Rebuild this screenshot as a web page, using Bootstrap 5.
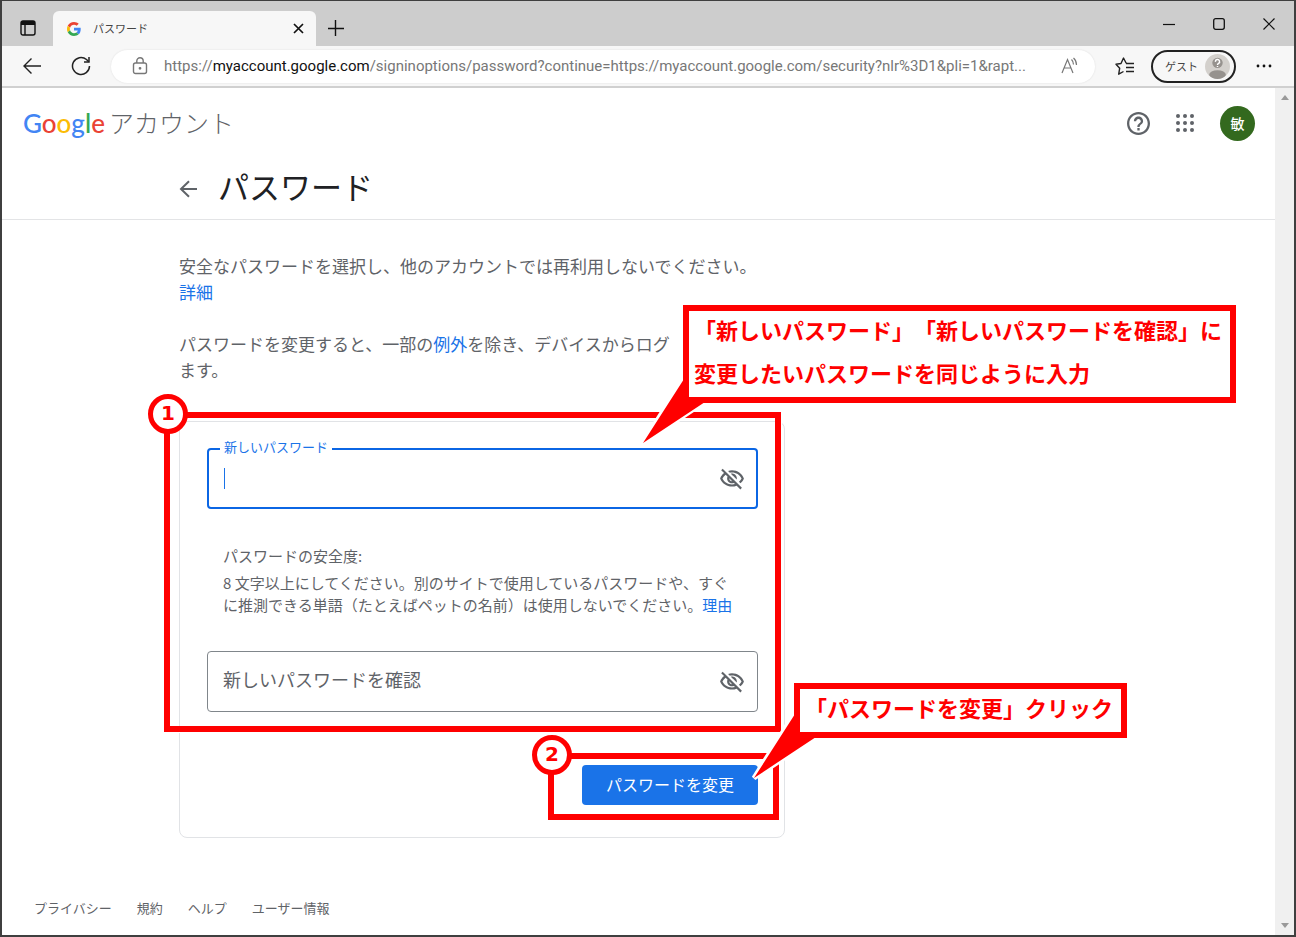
<!DOCTYPE html>
<html lang="ja">
<head>
<meta charset="utf-8">
<meta name="viewport" content="width=device-width, initial-scale=1">
<title>パスワード</title>
<link href="https://cdn.jsdelivr.net/npm/bootstrap@5.3.0/dist/css/bootstrap.min.css" rel="stylesheet">
<style>
body{font-family:"Noto Sans CJK JP",sans-serif;color:#5f6368;background:#3a3a3a}
.plain{background:none;border:0;padding:0;color:inherit;display:flex;align-items:center;justify-content:center;flex:none}
svg{display:block;flex:none}
a{color:#1a73e8;text-decoration:none}
.win{min-height:100vh;border:1px solid #3f3f3f;border-width:1px 2px 2px 2px;background:#fff}
.tabstrip{height:45px;background:#cdcdcd;color:#111}
.tabstrip .lead-btn{width:51px}
.browser-tab{width:263px;height:35px;background:#f7f7f7;border-radius:6px 6px 0 0;padding:0 12px 0 14px;font-size:11px;color:#444}
.win-ctl{width:50px;height:45px}
.toolbar{height:42px;background:#f7f7f7;border-bottom:2px solid #d0d0d0;color:#222;padding:0 22px 0 20px}
.reload{margin:0 20px 0 29px}
.address{height:33px;background:#fff;border-radius:17px;padding:0 16px 0 21px;box-shadow:0 0 2px #ddd;min-width:0}
.address .url{font:15px/32px Roboto,"Open Sans",sans-serif;color:#777;overflow:hidden;text-overflow:ellipsis;white-space:nowrap}
.address b{font-weight:400;color:#111}
.guest{width:85px;height:33px;border:2px solid #222;border-radius:17px;font-size:11px;color:#444;white-space:nowrap}
.fav{margin-left:20px}
.scroll-col{width:19px;background:#f0f0f0;padding:7px 0}
.site-head{height:70px;padding:0 20px 0 21px}
.brand{color:#5f6368;font-size:25px;font-weight:300}
.g-word{font:500 26px/36px Lato,sans-serif}
.apps{margin:0 26px}
.avatar{width:35px;height:35px;border-radius:50%;background:#33691e;color:#fff;font-size:14px;font-weight:500}
.page-wrap{max-width:919px;width:100%;margin:0 auto}
.title-bar{height:62px;border-bottom:1px solid #e3e4e6}
.title-bar h1{font-size:31px;line-height:56px;padding-bottom:6px;font-weight:400;color:#202124}
.body-col{width:606px;max-width:100%;padding-top:33px}
.body-col p{font-size:17px;line-height:26px;margin-bottom:26px}
.pw-card{border:1px solid #e1e3e6;border-radius:8px;margin-top:38px;padding:26px 26px 32px 27px}
.field{height:61px;border:1px solid #80868b;border-radius:4px;padding:0 12px 0 15px}
.field.active{border:2px solid #0b66e4;padding:0 11px 0 15px}
.field input{border:0;outline:0;background:none;font-size:18px;color:#202124;min-width:0;height:55px;padding:0 0 6px;caret-color:transparent}
.field input::placeholder{color:#5f6368;opacity:1}
.field label{position:absolute;left:11px;top:-13px;background:#fff;padding:0 4px;font-size:13px;line-height:20px;color:#1a73e8}
.caret{width:1px;height:21px;background:#1a73e8}
.help{padding:36px 0 35px 16px;font-size:15px;line-height:22px}
.help-title{margin-bottom:5px}
.actions{padding-top:53px}
.btn-go{width:176px;height:40px;padding:0 0 3px;background:#1a73e8;color:#fff;font-size:16px;border-radius:4px;font-weight:400}
.foot{font-size:13px;line-height:20px;padding:0 0 17px 32px;gap:25px}
.foot a{color:#5f6368}
/* Step markers and callouts */
.mark-box{position:absolute;border:6px solid red;pointer-events:none;box-shadow:0 0 0 1px #fff}
.mark-1{inset:-36px -23px -20px -43px}
.mark-2{inset:-12px -21px -15px -34px}
.step{position:absolute;left:-22px;top:-24px;width:40px;height:40px;border:5px solid red;border-radius:50%;background:#fff;color:red;font:bold 20px/29px "DejaVu Sans",sans-serif;text-align:center}
.callout{position:absolute;border:6px solid red;background:#fff;color:red;font-size:22px;line-height:43px;font-weight:700;white-space:nowrap;padding:0 8px 0 5px;box-shadow:0 0 0 1px #fff;z-index:2}
.callout-text{margin:-3px 0 3px;text-spacing-trim:space-all;font-kerning:none;font-feature-settings:"chws" 0,"halt" 0}
.callout svg{position:absolute;overflow:visible;left:-46px;bottom:-46px}
.callout-1{left:476px;top:-143px}
.callout-2{left:212px;top:-82px}
</style>
</head>
<body>
<div class="win d-flex flex-column">
  <div class="tabstrip d-flex align-items-end">
    <button class="plain lead-btn h-100 pt-2" aria-label="タブ操作"><svg width="16" height="16" viewBox="0 0 16 16" fill="none" stroke="currentColor" stroke-width="1.4"><rect x="1" y="1" width="14" height="14" rx="2"/><path d="M1 3h14" stroke-width="4"/><path d="M5 4v11"/></svg></button>
    <div class="browser-tab d-flex align-items-center">
      <svg width="14" height="14" viewBox="0 0 48 48"><path fill="#ea4335" d="M24 9.5c3.5 0 6.700 1.200 9.200 3.600l6.900-6.900C35.900 2.400 30.500 0 24 0 14.600 0 6.500 5.400 2.600 13.200l8 6.200C12.400 13.700 17.700 9.500 24 9.500z"/><path fill="#4285f4" d="M47 24.500c0-1.600-.2-3.100-.4-4.500H24v9h12.900c-.6 3-2.200 5.500-4.700 7.200l7.700 6C44.400 38 47 31.800 47 24.500z"/><path fill="#fbbc05" d="M10.500 28.600c-.5-1.500-.8-3-.8-4.600s.3-3.100.8-4.600l-8-6.200C.9 16.500 0 20.100 0 24s.9 7.500 2.600 10.800z"/><path fill="#34a853" d="M24 48c6.500 0 11.900-2.100 15.900-5.800l-7.700-6c-2.200 1.500-4.900 2.300-8.200 2.300-6.300 0-11.600-4.200-13.500-9.900l-7.900 6.200C6.500 42.600 14.600 48 24 48z"/></svg>
      <span class="ms-2 ps-1 flex-grow-1">パスワード</span>
      <button class="plain" aria-label="タブを閉じる"><svg width="11" height="11" viewBox="0 0 11 11" stroke="#111" stroke-width="1.700"><path d="M1 1l9 9M10 1l-9 9"/></svg></button>
    </div>
    <button class="plain h-100 px-2 ms-1 pt-2" aria-label="新しいタブ"><svg width="16" height="16" viewBox="0 0 16 16" stroke="#111" stroke-width="1.400"><path d="M7.500 0v16M0 8.500h16"/></svg></button>
    <div class="d-flex ms-auto">
      <button class="plain win-ctl" aria-label="最小化"><svg width="12" height="12" viewBox="0 0 12 12" stroke="#111" stroke-width="1.200"><path d="M0 6.500h12"/></svg></button>
      <button class="plain win-ctl" aria-label="最大化"><svg width="12" height="12" viewBox="0 0 12 12" fill="none" stroke="#111" stroke-width="1.300"><rect x=".7" y=".7" width="10.600" height="10.600" rx="2"/></svg></button>
      <button class="plain win-ctl" aria-label="閉じる"><svg width="12" height="12" viewBox="0 0 12 12" stroke="#111" stroke-width="1.200"><path d="M.5.5l11 11M11.500.5l-11 11"/></svg></button>
    </div>
  </div>

  <div class="toolbar d-flex align-items-center">
    <button class="plain" aria-label="戻る"><svg width="20" height="18" viewBox="0 0 20 18" fill="none" stroke="currentColor" stroke-width="1.400"><path d="M19 9H2M9.500 1.500L2 9l7.500 7.500"/></svg></button>
    <button class="plain reload" aria-label="更新"><svg width="20" height="20" viewBox="0 0 20 20" fill="none" stroke="currentColor" stroke-width="1.500"><path d="M18.500 10A8.500 8.500 0 1 1 15.500 3.500L17.800 5.700"/><path d="M18 1v5h-5"/></svg></button>
    <div class="address d-flex align-items-center flex-grow-1">
      <svg width="16" height="18" viewBox="0 0 16 18" fill="none" stroke="#777" stroke-width="1.400"><rect x="1.500" y="6" width="13" height="10.500" rx="2"/><path d="M4.800 6V4a3.200 3.200 0 0 1 6.400 0v2"/><circle cx="8" cy="11.300" r=".7" fill="#777"/></svg>
      <span class="url flex-grow-1 ms-3">https://<b>myaccount.google.com</b>/signinoptions/password?continue=https://myaccount.google.com/security?nlr%3D1&amp;pli=1&amp;rapt...</span>
      <button class="plain ms-1" aria-label="音声で読み上げる"><svg width="18" height="18" viewBox="0 0 18 18" fill="none" stroke="#777" stroke-width="1.200"><path d="M1 16L6.500 2.500 12 16M3 11h7M10.500 2.500q2 2 2 5M12.500 1q3 2.500 3 7"/></svg></button>
    </div>
    <button class="plain fav" aria-label="お気に入り"><svg width="20" height="19" viewBox="0 0 20 19" fill="none" stroke="currentColor" stroke-width="1.400" stroke-linejoin="round"><path d="M11.200 6.200L8.500 1 6 6.500 1 7.200l3.700 4-1 6L8.500 14.500"/><path d="M11 6.500h8M11 10.500h8M11 14.500h8"/></svg></button>
    <button class="plain guest ms-3 px-1"><span class="ms-2 me-auto">ゲスト</span><svg width="25" height="25" viewBox="0 0 24 24"><defs><clipPath id="face"><circle cx="12" cy="12" r="12"/></clipPath></defs><g clip-path="url(#face)"><path fill="#d3d0cc" d="M0 0h24v24H0z"/><ellipse cx="12" cy="20" rx="8" ry="4.500" fill="#96928e"/><circle cx="12" cy="8.500" r="5" fill="#96928e"/></g><path d="M10 7.500a2 2 0 1 1 3 1.500q-1 .5-1 1.500M12 11.500v1" fill="none" stroke="#fff" stroke-width="1.400"/></svg></button>
    <button class="plain ms-3 ps-1" aria-label="設定など"><svg width="16" height="4" viewBox="0 0 16 4" fill="#111"><circle cx="2" cy="2" r="1.400"/><circle cx="8" cy="2" r="1.400"/><circle cx="14" cy="2" r="1.400"/></svg></button>
  </div>

  <div class="d-flex flex-grow-1">
    <div class="d-flex flex-column flex-grow-1">
      <header class="site-head d-flex align-items-center">
        <a href="#" class="brand d-flex align-items-center"><span class="g-word"><span style="color:#4285f4">G</span><span style="color:#ea4335">o</span><span style="color:#fbbc05">o</span><span style="color:#4285f4">g</span><span style="color:#34a853">l</span><span style="color:#ea4335">e</span></span><span class="ms-1">アカウント</span></a>
        <button class="plain ms-auto" aria-label="ヘルプ"><svg width="23" height="23" viewBox="2 2 20 20" fill="#5f6368"><path d="M11 18h2v-2h-2v2zm1-16C6.480 2 2 6.480 2 12s4.480 10 10 10 10-4.480 10-10S17.520 2 12 2zm0 18c-4.410 0-8-3.590-8-8s3.590-8 8-8 8 3.590 8 8-3.590 8-8 8zm0-14c-2.210 0-4 1.790-4 4h2c0-1.100.9-2 2-2s2 .9 2 2c0 2-3 1.750-3 5h2c0-2.250 3-2.500 3-5 0-2.210-1.790-4-4-4z"/></svg></button>
        <button class="plain apps" aria-label="アプリ"><svg width="18" height="18" viewBox="0 0 18 18" fill="#5f6368"><circle cx="2" cy="2" r="2"/><circle cx="9" cy="2" r="2"/><circle cx="16" cy="2" r="2"/><circle cx="2" cy="9" r="2"/><circle cx="9" cy="9" r="2"/><circle cx="16" cy="9" r="2"/><circle cx="2" cy="16" r="2"/><circle cx="9" cy="16" r="2"/><circle cx="16" cy="16" r="2"/></svg></button>
        <button class="plain avatar">敏</button>
      </header>
      <div class="title-bar">
        <div class="page-wrap d-flex align-items-center">
          <a href="#" aria-label="戻る"><svg width="19" height="18" viewBox="0 0 19 18" fill="none" stroke="#5f6368" stroke-width="2"><path d="M18 9H2.500M10 1.200L2 9l8 7.800"/></svg></a>
          <h1 class="mb-0 ms-3 ps-1">パスワード</h1>
        </div>
      </div>
      <main class="page-wrap">
        <div class="body-col">
          <p>安全なパスワードを選択し、他のアカウントでは再利用しないでください。<br><a href="#">詳細</a></p>
          <p>パスワードを変更すると、一部の<a href="#">例外</a>を除き、デバイスからログ<br>ます。</p>
          <form class="pw-card position-relative">
            <div class="position-relative">
              <div class="field active d-flex align-items-center position-relative">
                <label for="pw-new">新しいパスワード</label>
                <span class="caret"></span>
                <input type="password" id="pw-new" class="flex-grow-1">
                <button type="button" class="plain" aria-label="パスワードを表示"><svg width="26" height="26" viewBox="0 0 24 24" fill="#5f6368"><use href="#eye-off"/></svg></button>
              </div>
              <div class="help">
                <div class="help-title">パスワードの安全度:</div>
                <div>8 文字以上にしてください。別のサイトで使用しているパスワードや、すぐ<br>に推測できる単語（たとえばペットの名前）は使用しないでください。<a href="#">理由</a></div>
              </div>
              <div class="field d-flex align-items-center">
                <input type="password" id="pw-again" class="flex-grow-1" placeholder="新しいパスワードを確認" aria-label="新しいパスワードを確認">
                <button type="button" class="plain" aria-label="パスワードを表示"><svg width="26" height="26" viewBox="0 0 24 24" fill="#5f6368"><g id="eye-off"><path d="M12 6c3.790 0 7.170 2.130 8.820 5.500-.59 1.220-1.420 2.270-2.410 3.120l1.410 1.410c1.390-1.230 2.490-2.770 3.180-4.530C21.270 7.110 17 4 12 4c-1.270 0-2.490.2-3.640.57l1.650 1.650C10.660 6.090 11.320 6 12 6zm-1.070 1.140L13 9.210c.57.25 1.030.71 1.280 1.280l2.070 2.070c.08-.34.14-.7.14-1.070C16.500 9.010 14.480 7 12 7c-.37 0-.72.05-1.070.14zM2.010 3.870l2.680 2.680C3.060 7.830 1.770 9.530 1 11.500 2.730 15.890 7 19 12 19c1.520 0 2.980-.29 4.320-.82l3.420 3.420 1.410-1.410L3.420 2.450 2.010 3.870zm7.500 7.500l2.610 2.610c-.04.01-.08.02-.12.02-1.380 0-2.500-1.120-2.500-2.500 0-.05.01-.08.01-.13zm-3.400-3.400l1.750 1.750c-.23.55-.36 1.150-.36 1.780 0 2.480 2.020 4.500 4.500 4.500.63 0 1.230-.13 1.770-.36l.98.98c-.88.24-1.800.38-2.750.38-3.790 0-7.170-2.130-8.820-5.500.7-1.430 1.720-2.610 2.930-3.530z"/></g></svg></button>
              </div>
              <div class="mark-box mark-1"><span class="step">1</span></div>
              <div class="callout callout-1"><div class="callout-text">「新しいパスワード」「新しいパスワードを確認」に<br>変更したいパスワードを同じように入力</div><svg width="64" height="64" viewBox="0 0 64 64"><path d="M37 5L0 64 57 26" fill="none" stroke="#fff" stroke-width="5"/><path d="M41 0L0 64 62 23 44 19z" fill="red"/></svg></div>
            </div>
            <div class="actions d-flex justify-content-end">
              <div class="position-relative">
                <button type="submit" class="btn btn-go">パスワードを変更</button>
                <div class="mark-box mark-2"><span class="step">2</span></div>
                <div class="callout callout-2"><div class="callout-text">「パスワードを変更」クリック</div><svg width="64" height="64" viewBox="0 0 64 64"><path d="M37 5L0 64 57 26" fill="none" stroke="#fff" stroke-width="5"/><path d="M41 0L0 64 62 23 44 19z" fill="red"/></svg></div>
              </div>
            </div>
          </form>
        </div>
      </main>
      <footer class="foot d-flex mt-auto"><a href="#">プライバシー</a><a href="#">規約</a><a href="#">ヘルプ</a><a href="#">ユーザー情報</a></footer>
    </div>
    <div class="scroll-col d-flex flex-column justify-content-between align-items-center"><svg width="8" height="5" viewBox="0 0 8 5" fill="#999"><path d="M0 5l4-5 4 5z"/></svg><svg width="8" height="5" viewBox="0 0 8 5" fill="#999"><path d="M0 0l4 5 4-5z"/></svg></div>
  </div>
</div>
<script src="https://cdn.jsdelivr.net/npm/bootstrap@5.3.0/dist/js/bootstrap.bundle.min.js"></script>
</body>
</html>
